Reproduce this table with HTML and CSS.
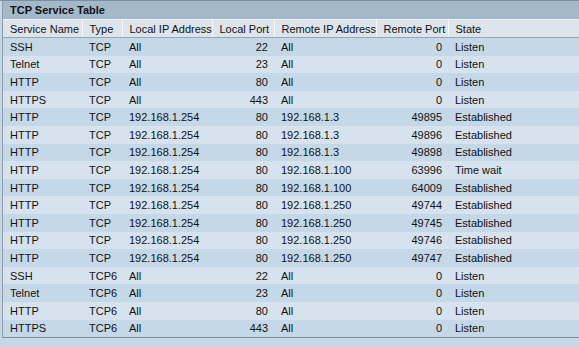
FILE: index.html
```html
<!DOCTYPE html>
<html>
<head>
<meta charset="utf-8">
<link rel="stylesheet" href="styles.css">
</head>
<body>
<div class="panel">
  <div class="title">TCP Service Table</div>
  <table class="grid">
    <colgroup>
      <col class="c1"><col class="c2"><col class="c3"><col class="c4"><col class="c5"><col class="c6"><col class="c7">
    </colgroup>
    <thead>
      <tr><th>Service Name</th><th>Type</th><th>Local IP Address</th><th>Local Port</th><th>Remote IP Address</th><th>Remote Port</th><th>State</th></tr>
    </thead>
    <tbody>
      <tr><td>SSH</td><td>TCP</td><td>All</td><td class="num">22</td><td>All</td><td class="num">0</td><td>Listen</td></tr>
      <tr><td>Telnet</td><td>TCP</td><td>All</td><td class="num">23</td><td>All</td><td class="num">0</td><td>Listen</td></tr>
      <tr><td>HTTP</td><td>TCP</td><td>All</td><td class="num">80</td><td>All</td><td class="num">0</td><td>Listen</td></tr>
      <tr><td>HTTPS</td><td>TCP</td><td>All</td><td class="num">443</td><td>All</td><td class="num">0</td><td>Listen</td></tr>
      <tr><td>HTTP</td><td>TCP</td><td>192.168.1.254</td><td class="num">80</td><td>192.168.1.3</td><td class="num">49895</td><td>Established</td></tr>
      <tr><td>HTTP</td><td>TCP</td><td>192.168.1.254</td><td class="num">80</td><td>192.168.1.3</td><td class="num">49896</td><td>Established</td></tr>
      <tr><td>HTTP</td><td>TCP</td><td>192.168.1.254</td><td class="num">80</td><td>192.168.1.3</td><td class="num">49898</td><td>Established</td></tr>
      <tr><td>HTTP</td><td>TCP</td><td>192.168.1.254</td><td class="num">80</td><td>192.168.1.100</td><td class="num">63996</td><td>Time wait</td></tr>
      <tr><td>HTTP</td><td>TCP</td><td>192.168.1.254</td><td class="num">80</td><td>192.168.1.100</td><td class="num">64009</td><td>Established</td></tr>
      <tr><td>HTTP</td><td>TCP</td><td>192.168.1.254</td><td class="num">80</td><td>192.168.1.250</td><td class="num">49744</td><td>Established</td></tr>
      <tr><td>HTTP</td><td>TCP</td><td>192.168.1.254</td><td class="num">80</td><td>192.168.1.250</td><td class="num">49745</td><td>Established</td></tr>
      <tr><td>HTTP</td><td>TCP</td><td>192.168.1.254</td><td class="num">80</td><td>192.168.1.250</td><td class="num">49746</td><td>Established</td></tr>
      <tr><td>HTTP</td><td>TCP</td><td>192.168.1.254</td><td class="num">80</td><td>192.168.1.250</td><td class="num">49747</td><td>Established</td></tr>
      <tr><td>SSH</td><td>TCP6</td><td>All</td><td class="num">22</td><td>All</td><td class="num">0</td><td>Listen</td></tr>
      <tr><td>Telnet</td><td>TCP6</td><td>All</td><td class="num">23</td><td>All</td><td class="num">0</td><td>Listen</td></tr>
      <tr><td>HTTP</td><td>TCP6</td><td>All</td><td class="num">80</td><td>All</td><td class="num">0</td><td>Listen</td></tr>
      <tr><td>HTTPS</td><td>TCP6</td><td>All</td><td class="num">443</td><td>All</td><td class="num">0</td><td>Listen</td></tr>
    </tbody>
  </table>
</div>
</body>
</html>
```

FILE: styles.css
```css
html, body {
  margin: 0;
  padding: 0;
}
body {
  background: #c6d8e6;
  font-family: "Liberation Sans", Arial, sans-serif;
  font-size: 11px;
  color: #111;
  width: 579px;
  height: 347px;
  overflow: hidden;
  border-top: 1px solid #7d8e9c;
}
.panel {
  margin-left: 2px;
  width: 600px;
  border-left: 1px solid #8e9aa6;
  border-bottom: 1px solid #7f8d99;
}
.title {
  height: 18px;
  line-height: 18px;
  background: #a3b9c9;
  font-weight: bold;
  padding-left: 7px;
  border-bottom: 1px solid #eef2f6;
}
.grid {
  border-collapse: collapse;
  table-layout: fixed;
  width: 600px;
}
.c1 { width: 79px; }
.c2 { width: 40px; }
.c3 { width: 90px; }
.c4 { width: 62px; }
.c5 { width: 102px; }
.c6 { width: 72px; }
.c7 { width: 155px; }
.grid th {
  height: 17px;
  padding: 0 6px 0 7px;
  text-align: left;
  font-weight: normal;
  background: #dce4ec;
  border-right: 1px solid #f6f8fa;
  border-left: 1px solid #a9b5c1;
  border-bottom: 1px solid #98a6b3;
  white-space: nowrap;
  overflow: hidden;
}
.grid th:first-child {
  border-left: none;
}
.grid td {
  height: 17.6px;
  padding: 0 6px 0 7px;
  white-space: nowrap;
  overflow: hidden;
}
.grid tbody tr:nth-child(odd) td {
  background: #c5d8e7;
}
.grid tbody tr:nth-child(even) td {
  background: #d6e3ef;
}
.grid td.num {
  text-align: right;
}
```
